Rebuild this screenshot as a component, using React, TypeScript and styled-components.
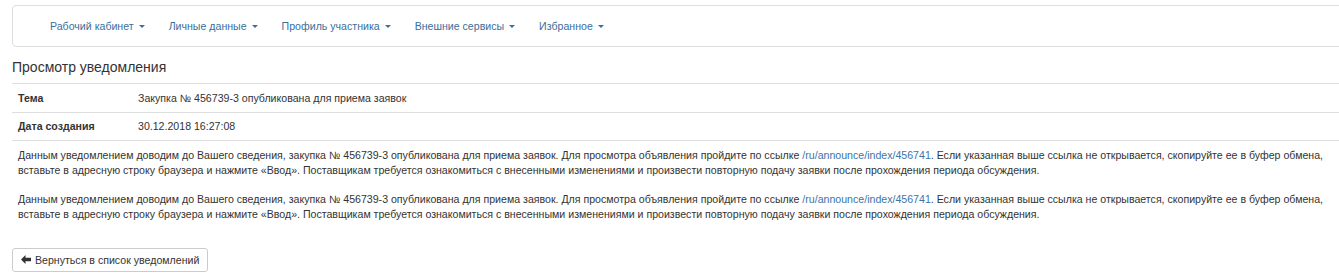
import React from 'react'
import styled, { createGlobalStyle } from 'styled-components';

const GlobalStyle = createGlobalStyle`
  html, body {
    margin: 0;
    padding: 0;
    background: #fff;
    overflow-x: hidden;
  }
  body {
    font-family: "Liberation Sans", Arial, Helvetica, sans-serif;
    font-size: 10.6px;
    color: #333;
  }
`

const Page = styled.div`
  padding: 5px 0 0 12px;
  margin-right: -10px;
`

const Navbar = styled.nav`
  display: flex;
  align-items: center;
  height: 40px;
  padding-left: 25px;
  border: 1px solid #dddddd;
  border-radius: 4px;
  background: #fff;
`

const NavItem = styled.a`
  display: flex;
  align-items: center;
  padding: 0 12px;
  color: #3b6e9c;
  font-size: 10.6px;
  text-decoration: none;
  cursor: pointer;
`

const Caret = styled.span`
  display: inline-block;
  width: 0;
  height: 0;
  margin-left: 5px;
  margin-top: 1px;
  border-top: 3px solid #3b6e9c;
  border-left: 3px solid transparent;
  border-right: 3px solid transparent;
`

const Title = styled.h1`
  margin: 10px 0 0;
  padding-bottom: 6px;
  border-bottom: 1px solid #dddddd;
  font-size: 14px;
  font-weight: 400;
  line-height: 20px;
  color: #333;
`

const Table = styled.table`
  width: 100%;
  border-collapse: collapse;
`

const Cell = styled.td<{ $label?: boolean }>`
  height: 28px;
  padding: 0 6px;
  border-bottom: 1px solid #dddddd;
  width: ${props => props.$label ? '120px' : 'auto'};
  box-sizing: border-box;
  font-weight: ${props => props.$label ? 700 : 400};
  line-height: 16px;
  vertical-align: middle;
`

const Body = styled.div`
  padding: 7px 6px 0;
`

const Paragraph = styled.p`
  margin: 0 0 14px;
  line-height: 15px;
`

const Link = styled.a`
  color: #3b75a8;
  text-decoration: none;
`

const BackButton = styled.button`
  display: inline-flex;
  align-items: center;
  gap: 4px;
  height: 24px;
  margin-top: 12px;
  padding: 0 8px;
  border: 1px solid #cccccc;
  border-radius: 3px;
  background: #fff;
  color: #333;
  font-family: inherit;
  font-size: 10.6px;
  cursor: pointer;
`

const menu = ['Рабочий кабинет', 'Личные данные', 'Профиль участника', 'Внешние сервисы', 'Избранное']

function ArrowLeft() {
  return (
    <svg width="10" height="9" viewBox="0 0 10 9">
      <path d="M0 4.5 L4.5 0 L4.5 2.8 L10 2.8 L10 6.2 L4.5 6.2 L4.5 9 Z" fill="#333" />
    </svg>
  )
}

function Notice() {
  return (
    <Paragraph>
      Данным уведомлением доводим до Вашего сведения, закупка № 456739-3 опубликована для приема заявок. Для просмотра объявления пройдите по ссылке <Link>/ru/announce/index/456741</Link>. Если указанная выше ссылка не открывается, скопируйте ее в буфер обмена, вставьте в адресную строку браузера и нажмите «Ввод». Поставщикам требуется ознакомиться с внесенными изменениями и произвести повторную подачу заявки после прохождения периода обсуждения.
    </Paragraph>
  )
}

export default function App() {
  return (
    <Page>
      <GlobalStyle />
      <Navbar>
        {menu.map(item => (
          <NavItem key={item}>{item}<Caret /></NavItem>
        ))}
      </Navbar>
      <Title>Просмотр уведомления</Title>
      <Table>
        <tbody>
          <tr>
            <Cell $label>Тема</Cell>
            <Cell>Закупка № 456739-3 опубликована для приема заявок</Cell>
          </tr>
          <tr>
            <Cell $label>Дата создания</Cell>
            <Cell>30.12.2018 16:27:08</Cell>
          </tr>
        </tbody>
      </Table>
      <Body>
        <Notice />
        <Notice />
      </Body>
      <BackButton><ArrowLeft />Вернуться в список уведомлений</BackButton>
    </Page>
  )
}
